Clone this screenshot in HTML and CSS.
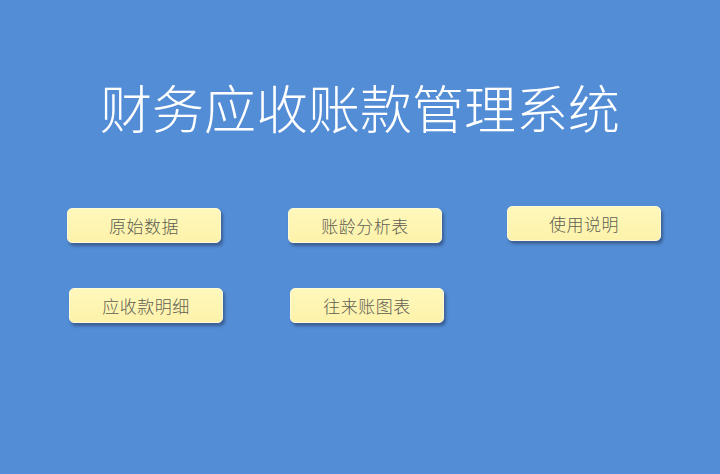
FILE: index.html
```html
<!DOCTYPE html>
<html lang="zh-CN">
<head>
    <meta charset="UTF-8">
    <meta name="viewport" content="width=device-width, initial-scale=1.0">
    <title>财务应收账款管理系统</title>
    <link rel="stylesheet" href="styles.css">
</head>
<body>
    <h1 class="title">财务应收账款管理系统</h1>
    <div class="menu">
        <button class="menu-btn">原始数据</button>
        <button class="menu-btn">账龄分析表</button>
        <button class="menu-btn up">使用说明</button>
        <button class="menu-btn right">应收款明细</button>
        <button class="menu-btn right">往来账图表</button>
    </div>
</body>
</html>
```

FILE: styles.css
```css
html, body {
    height: 100%;
}
body {
    margin: 0;
    background-color: #538dd5;
    font-family: "Noto Sans CJK SC", "Noto Sans", sans-serif;
    overflow: hidden;
}
.title {
    margin: 0;
    padding-top: 72px;
    text-align: center;
    color: #ffffff;
    font-size: 52px;
    font-weight: 300;
    line-height: 70px;
}
.menu {
    display: grid;
    grid-template-columns: repeat(3, 154px);
    column-gap: 67px;
    row-gap: 45px;
    padding: 66px 0 0 67px;
}
.menu-btn {
    width: 154px;
    height: 35px;
    padding: 0;
    border: 1px solid #fffbd8;
    border-radius: 5px;
    background: linear-gradient(#fff8bc, #fdf2aa);
    color: #5f5e53;
    font-family: inherit;
    font-size: 17px;
    font-weight: 300;
    letter-spacing: 0.5px;
    box-shadow: 2px 3px 3px rgba(30, 40, 70, 0.45);
    cursor: pointer;
}
.menu-btn:hover {
    background: #fff3a0;
}
.up {
    margin: -2px 0 0 -2px;
}
.right {
    margin-left: 2px;
}
```
